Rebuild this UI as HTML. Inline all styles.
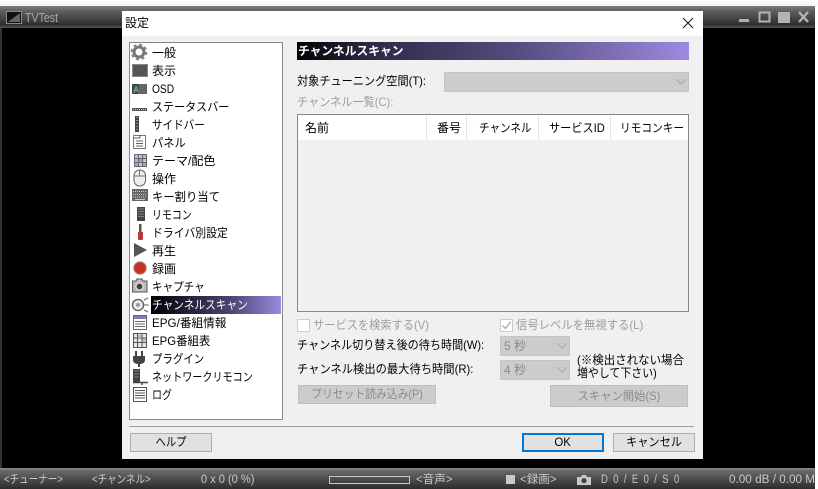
<!DOCTYPE html>
<html lang="ja"><head><meta charset="utf-8"><title>TVTest 設定</title>
<style>
*{box-sizing:border-box}
html,body{margin:0;padding:0;width:818px;height:489px;overflow:hidden;background:#fff}
body{position:relative;font-family:"Liberation Sans","Noto Sans CJK JP",sans-serif;font-size:12px;color:#000}
.a{position:absolute;white-space:nowrap}
.t{position:absolute;white-space:nowrap;line-height:16px;height:16px;transform-origin:0 50%}
.dis{color:#9d9d9d}
.btn{position:absolute;background:#e1e1e1;border:1px solid #adadad;text-align:center;white-space:nowrap}
.btnd{position:absolute;background:#ccc;border:1px solid #bfbfbf;text-align:center;color:#8a8a8a;white-space:nowrap}
.btn span,.btnd span{display:inline-block}
.cb{position:absolute;background:#ccc;border:1px solid #c4c4c4;color:#8a8a8a}
.st{position:absolute;top:473px;color:#c8c8c8;line-height:14px;white-space:nowrap;font-size:11.5px;transform-origin:0 50%}
.it{position:absolute;left:152px;line-height:16px;white-space:nowrap;transform-origin:0 50%}
</style></head><body>
<!-- main window -->
<div class="a" style="left:0;top:0;width:818px;height:7px;background:linear-gradient(#fff,#f2f2f2)"></div>
<div class="a" style="left:0;top:6px;width:816px;height:22px;background:linear-gradient(#7d7d7d,#5d5d5d 25%,#2e2e2e 85%,#555)"></div>
<div class="a" style="left:0;top:28px;width:816px;height:440px;background:#000"></div>
<div class="a" style="left:0;top:28px;width:2px;height:440px;background:#333"></div>
<div class="a" style="left:0;top:468px;width:816px;height:21px;background:linear-gradient(#8d8d8d,#6a6a6a 12%,#555 40%,#2c2c2c)"></div>
<div class="a" style="left:815px;top:6px;width:3px;height:483px;background:#fff"></div>
<svg class="a" style="left:6px;top:11px" width="16" height="14"><rect x=".5" y=".5" width="15" height="12" fill="#111" stroke="#8a8a8a"/><path d="M2 11 14 2V11Z" fill="#666"/></svg>
<div class="t" style="left:25px;top:10px;color:#a9a9a9;font-size:12.5px;transform:scaleX(.85)">TVTest</div>
<svg class="a" style="left:735px;top:10px" width="78" height="15">
<rect x="4" y="9" width="10" height="3" fill="#b0b0b0"/>
<rect x="24.5" y="2.5" width="10" height="9" fill="none" stroke="#b4b4b4" stroke-width="2"/>
<rect x="43" y="2" width="12" height="11" fill="#b4b4b4"/>
<path d="M64 2 73 12M73 2 64 12" stroke="#b4b4b4" stroke-width="2.4" fill="none"/></svg>
<!-- status bar -->
<div class="st" style="left:4px;transform:scaleX(.83)">&lt;チューナー&gt;</div>
<div class="st" style="left:92px;transform:scaleX(.83)">&lt;チャンネル&gt;</div>
<div class="st" style="left:201px;transform:scaleX(.96)">0 x 0 (0 %)</div>
<div class="a" style="left:329px;top:476px;width:81px;height:8px;border:1px solid #c8c8c8"></div>
<div class="st" style="left:416px">&lt;音声&gt;</div>
<div class="a" style="left:506px;top:475px;width:9px;height:9px;background:#c8c8c8"></div>
<div class="st" style="left:520px">&lt;録画&gt;</div>
<svg class="a" style="left:577px;top:475px" width="14" height="10"><path d="M0 2H4L5 0H9L10 2H14V10H0Z" fill="#c8c8c8"/><circle cx="7" cy="5.6" r="2.6" fill="#444"/></svg>
<div class="st" style="left:601px;letter-spacing:1.7px;transform:scaleX(.82)">D 0 / E 0 / S 0</div>
<div class="st" style="left:729px;transform:scaleX(1.02)">0.00 dB / 0.00 M</div>
<!-- dialog -->
<div class="a" style="left:122px;top:11px;width:581px;height:448px;background:#f0f0f0"></div>
<div class="a" style="left:122px;top:11px;width:581px;height:25px;background:#fff"></div>
<div class="t" style="left:125px;top:15px">設定</div>
<svg class="a" style="left:682px;top:17px" width="12" height="12"><path d="M1 1 11 11M11 1 1 11" stroke="#111" fill="none"/></svg>
<!-- list -->
<div class="a" style="left:129px;top:42px;width:154px;height:378px;background:#fff;border:1px solid #828790"></div>
<div class="a" style="left:151px;top:296px;width:130px;height:18px;background:linear-gradient(90deg,#000 0%,#1a1528 20%,#4b4270 60%,#9c8ae0 100%)"></div>
<div class="it" style="top:45px">一般</div>
<div class="it" style="top:63px">表示</div>
<div class="it" style="top:81px;transform:scaleX(.85)">OSD</div>
<div class="it" style="top:99px;transform:scaleX(.92)">ステータスバー</div>
<div class="it" style="top:117px;transform:scaleX(.88)">サイドバー</div>
<div class="it" style="top:135px;transform:scaleX(.94)">パネル</div>
<div class="it" style="top:153px">テーマ/配色</div>
<div class="it" style="top:171px">操作</div>
<div class="it" style="top:189px;transform:scaleX(.944)">キー割り当て</div>
<div class="it" style="top:207px;transform:scaleX(.83)">リモコン</div>
<div class="it" style="top:225px;transform:scaleX(.905)">ドライバ別設定</div>
<div class="it" style="top:243px">再生</div>
<div class="it" style="top:261px">録画</div>
<div class="it" style="top:279px;transform:scaleX(.88)">キャプチャ</div>
<div class="it" style="top:297px;color:#fff;transform:scaleX(.89)">チャンネルスキャン</div>
<div class="it" style="top:315px;transform:scaleX(.97)">EPG/番組情報</div>
<div class="it" style="top:333px;transform:scaleX(.95)">EPG番組表</div>
<div class="it" style="top:351px;transform:scaleX(.87)">プラグイン</div>
<div class="it" style="top:369px;transform:scaleX(.84)">ネットワークリモコン</div>
<div class="it" style="top:387px;transform:scaleX(.83)">ログ</div>
<svg class="a" style="left:130px;top:43px" width="20" height="370" fill="none">
<!-- gear -->
<circle cx="9" cy="9" r="5" stroke="#777" stroke-width="3"/><circle cx="9" cy="9" r="7.4" stroke="#888" stroke-width="2" stroke-dasharray="3 2.8"/>
<!-- display -->
<rect x="2.5" y="21.5" width="15" height="12" fill="#555" stroke="#888"/>
<!-- OSD -->
<rect x="2" y="41" width="15" height="10" fill="#666"/><rect x="2" y="41" width="7" height="10" fill="#3d4d49"/><text x="3.5" y="49.5" font-size="8" fill="#9fe0c8" font-family="Liberation Sans">A</text>
<!-- status -->
<rect x="2" y="65" width="15" height="3" fill="#555"/><path d="M3 66.5H16" stroke="#ccc" stroke-dasharray="1 1"/>
<!-- side -->
<rect x="5" y="73" width="4" height="16" fill="#444"/><path d="M7 74V88" stroke="#ddd" stroke-dasharray="1 2"/>
<!-- panel -->
<rect x="3.5" y="92.5" width="12" height="13" fill="#fff" stroke="#777"/><path d="M4 95H10V92M6 98H13M6 100.500H13M6 103H13" stroke="#666"/>
<!-- theme -->
<g transform="translate(0,1)"><rect x="4" y="110" width="13" height="13" fill="#667"/><rect x="5" y="111" width="3" height="3" fill="#b7c9a8"/><rect x="9" y="111" width="3" height="3" fill="#d9b9b0"/><rect x="13" y="111" width="3" height="3" fill="#a8b9d0"/><rect x="5" y="115" width="3" height="3" fill="#a8c0d8"/><rect x="9" y="115" width="3" height="3" fill="#90b090"/><rect x="13" y="115" width="3" height="3" fill="#d8c890"/><rect x="5" y="119" width="3" height="3" fill="#c0a0b0"/><rect x="9" y="119" width="3" height="3" fill="#d0d0a0"/><rect x="13" y="119" width="3" height="3" fill="#90a8c0"/></g>
<g transform="translate(0,-1)">
<!-- mouse -->
<rect x="4" y="128" width="11.500" height="16" rx="5.500" fill="#eee" stroke="#666"/><path d="M9.500 128V134M4 134H15" stroke="#777"/>
<!-- keyboard -->
<rect x="2" y="147" width="16" height="12" fill="#666"/><path d="M3 149.500H17M3 152.500H17M3 155H17" stroke="#ccc" stroke-dasharray="1 1"/><path d="M5 157.500H15" stroke="#ccc"/>
<!-- remote -->
<rect x="7" y="165" width="8" height="14" fill="#444"/><path d="M8.500 167H14M8.500 169.500H14M8.500 172H14M8.500 174.500H14" stroke="#bbb" stroke-dasharray="1 1"/>
<!-- driver -->
<rect x="9" y="182" width="2.500" height="8" fill="#555"/><path d="M8 190H13L13 197.500 11.500 198H9.500L8 197.500Z" fill="#b23a3a"/>
<!-- play -->
<path d="M4 201 17 208 4 215Z" fill="#555"/>
<!-- rec -->
<circle cx="10" cy="226" r="6" fill="#c8321e"/><circle cx="10" cy="226" r="6.300" stroke="#999"/>
<!-- capture -->
<path d="M2.500 239H6L7 237H12L13 239H17V250H2.500Z" fill="#bbb" stroke="#555"/><circle cx="9.500" cy="244.500" r="3.500" fill="#444" stroke="#eee"/>
<!-- scan -->
<circle cx="8" cy="263" r="5.500" fill="#eee" stroke="#666" stroke-width="1.500"/><path d="M14 258 18 256M14 263H19M14 268 18 270" stroke="#666"/><circle cx="8" cy="263" r="2" fill="#999"/>
<!-- epg info -->
<rect x="3.500" y="273.500" width="13" height="14" fill="#fff" stroke="#666"/><rect x="4" y="274" width="12" height="3" fill="#8a79b8"/><path d="M5 279.500H15M5 282H15M5 284.500H15" stroke="#666"/>
<!-- epg table -->
<rect x="3.500" y="291.500" width="13" height="14" fill="#e8e8e8" stroke="#555"/><path d="M7.500 292V305M12 292V305M4 296H16M4 300.500H16" stroke="#555"/><rect x="8" y="293" width="3.500" height="3" fill="#d9a8b8"/><rect x="12.500" y="296.500" width="3.500" height="3.500" fill="#a8d0c0"/>
<!-- plug -->
<path d="M6 309V314M12 309V314" stroke="#444" stroke-width="2"/><path d="M3 314H15V318C15 321 12 322 10 322V325H8V322C6 322 3 321 3 318Z" fill="#444"/>
<!-- network -->
<rect x="3" y="327" width="7" height="13" fill="#444"/><path d="M4.500 329H9M4.500 332H9M4.500 335H9" stroke="#bbb" stroke-dasharray="1 1"/><path d="M3 340.500H18M12 340.500V343" stroke="#444" stroke-width="1.500"/>
<!-- log -->
<rect x="3.500" y="345.500" width="13" height="14" fill="#fff" stroke="#555"/><path d="M5 348.500H15M5 351H15M5 353.500H15M5 356H15" stroke="#555"/>
</g>
</svg>
<!-- right header -->
<div class="a" style="left:297px;top:42px;width:392px;height:18px;background:linear-gradient(90deg,#000 0%,#2e2845 18%,#554a7c 55%,#9c8ae0 100%)"></div>
<div class="t" style="left:298px;top:43px;color:#fff;font-weight:bold;transform:scaleX(.98)">チャンネルスキャン</div>
<div class="t" style="left:297px;top:73px;transform:scaleX(.93)">対象チューニング空間(T):</div>
<div class="cb" style="left:444px;top:72px;width:245px;height:20px"></div>
<div class="t dis" style="left:297px;top:94px;transform:scaleX(.93)">チャンネル一覧(C):</div>
<svg class="a" style="left:676px;top:79px" width="10" height="6"><path d="M.5.5 5 5 9.500.5" stroke="#a8a8a8" fill="none"/></svg>
<!-- table -->
<div class="a" style="left:297px;top:114px;width:392px;height:198px;background:#f0f0f0;border:1px solid #828790"></div>
<div class="a" style="left:298px;top:115px;width:390px;height:25px;background:#fff"></div>
<div class="a" style="left:426px;top:115px;width:1px;height:25px;background:#e5e5e5"></div>
<div class="a" style="left:466px;top:115px;width:1px;height:25px;background:#e5e5e5"></div>
<div class="a" style="left:538px;top:115px;width:1px;height:25px;background:#e5e5e5"></div>
<div class="a" style="left:610px;top:115px;width:1px;height:25px;background:#e5e5e5"></div>
<div class="t" style="left:305px;top:120px">名前</div>
<div class="t" style="left:437px;top:120px">番号</div>
<div class="t" style="left:479px;top:120px;transform:scaleX(.88)">チャンネル</div>
<div class="t" style="left:549px;top:120px;transform:scaleX(.93)">サービスID</div>
<div class="t" style="left:620px;top:120px;transform:scaleX(.89)">リモコンキー</div>
<!-- options -->
<div class="a" style="left:297px;top:319px;width:13px;height:13px;background:#fff;border:1px solid #ccc"></div>
<div class="t dis" style="left:313px;top:317px;transform:scaleX(.935)">サービスを検索する(V)</div>
<div class="a" style="left:500px;top:319px;width:13px;height:13px;background:#fff;border:1px solid #ccc"></div>
<svg class="a" style="left:501px;top:320px" width="11" height="11"><path d="M1.500 5.500 4.500 8.500 9.500 2" stroke="#a8a8a8" stroke-width="1.300" fill="none"/></svg>
<div class="t dis" style="left:516px;top:317px;transform:scaleX(.945)">信号レベルを無視する(L)</div>
<div class="t" style="left:297px;top:337px;transform:scaleX(.925)">チャンネル切り替え後の待ち時間(W):</div>
<div class="t" style="left:297px;top:361px;transform:scaleX(.94)">チャンネル検出の最大待ち時間(R):</div>
<div class="cb" style="left:500px;top:336px;width:70px;height:20px"></div>
<div class="cb" style="left:500px;top:360px;width:70px;height:20px"></div>
<div class="t" style="left:504px;top:338px;color:#8a8a8a">5 秒</div>
<div class="t" style="left:504px;top:362px;color:#8a8a8a">4 秒</div>
<svg class="a" style="left:557px;top:343px" width="10" height="30"><path d="M.5.500 5 5 9.500.500M.5 24.500 5 29 9.500 24.500" stroke="#a8a8a8" fill="none"/></svg>
<div class="t" style="left:577px;top:352px;transform:scaleX(.955)">(※検出されない場合</div>
<div class="t" style="left:577px;top:365px;transform:scaleX(.91)">増やして下さい)</div>
<div class="btnd" style="left:298px;top:385px;width:138px;height:19px;line-height:16px"><span style="transform:scaleX(.9)">プリセット読み込み(P)</span></div>
<div class="btnd" style="left:550px;top:385px;width:138px;height:22px;line-height:20px"><span style="transform:scaleX(.94)">スキャン開始(S)</span></div>
<div class="a" style="left:129px;top:426px;width:565px;height:1px;background:#a0a0a0"></div>
<div class="btn" style="left:130px;top:433px;width:82px;height:19px;line-height:16px"><span style="transform:scaleX(.86)">ヘルプ</span></div>
<div class="btn" style="left:522px;top:433px;width:82px;height:19px;line-height:14px;border:2px solid #0078d7"><span style="transform:scaleX(.95)">OK</span></div>
<div class="btn" style="left:613px;top:433px;width:82px;height:19px;line-height:16px"><span style="transform:scaleX(.93)">キャンセル</span></div>
</body></html>
